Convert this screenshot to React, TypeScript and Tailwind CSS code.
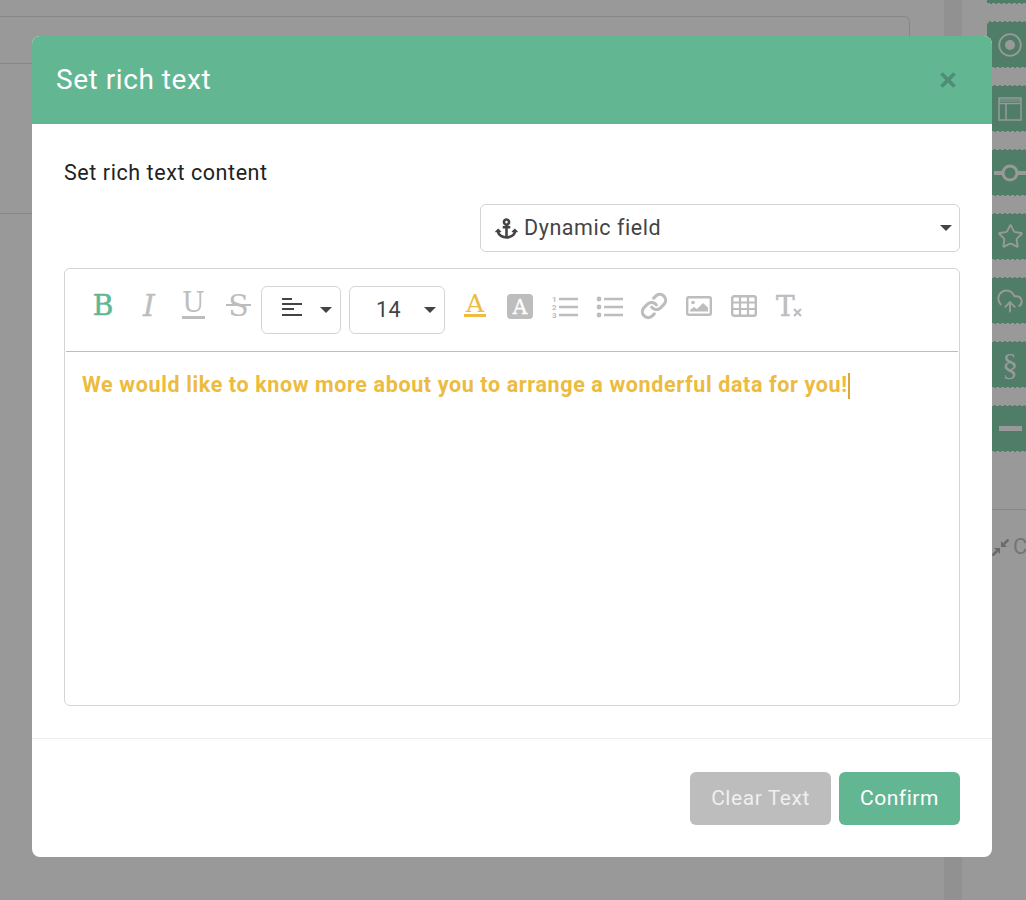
import { CloudUpload, Link, Star } from 'lucide-react';
import { FaAnchor } from 'react-icons/fa';

function Caret() {
  return <span className="w-0 h-0 border-x-[6.5px] border-x-transparent border-t-[6.5px] border-t-[#444]" />;
}

function OrderedIcon() {
  return (
    <svg width="28" height="26" viewBox="0 0 28 26" className="text-[#bdbdbd]">
      <text x="0" y="7" fontSize="8" fontWeight="700" fill="currentColor" fontFamily="Roboto">1</text>
      <text x="0" y="15" fontSize="8" fontWeight="700" fill="currentColor" fontFamily="Roboto">2</text>
      <text x="0" y="23" fontSize="8" fontWeight="700" fill="currentColor" fontFamily="Roboto">3</text>
      <path d="M7 4h19M7 12h19M7 20h19" stroke="currentColor" strokeWidth="2.600" />
    </svg>
  );
}

function BulletIcon() {
  return (
    <svg width="28" height="26" viewBox="0 0 28 26" className="text-[#bdbdbd]">
      <circle cx="3" cy="4" r="2.400" fill="currentColor" />
      <circle cx="3" cy="12" r="2.400" fill="currentColor" />
      <circle cx="3" cy="20" r="2.400" fill="currentColor" />
      <path d="M8 4h19M8 12h19M8 20h19" stroke="currentColor" strokeWidth="2.600" />
    </svg>
  );
}

function ImageIcon() {
  return (
    <svg width="26" height="20" viewBox="0 0 26 20" className="text-[#bdbdbd]">
      <rect x="1.200" y="1.200" width="23.600" height="17.600" rx="1.500" fill="none" stroke="currentColor" strokeWidth="2.400" />
      <circle cx="7" cy="6.500" r="1.800" fill="currentColor" />
      <path d="M4 15.500v-1.500l4-3 3 2 6-6 5 4.500v4z" fill="currentColor" />
    </svg>
  );
}

function TableIcon() {
  return (
    <svg width="26" height="22" viewBox="0 0 26 22" className="text-[#bdbdbd]">
      <rect x="1.200" y="1.200" width="23.600" height="19.600" rx="2" fill="none" stroke="currentColor" strokeWidth="2.400" />
      <path d="M1 7.500h24M1 14h24M9 1v20M17 1v20" stroke="currentColor" strokeWidth="2.200" />
    </svg>
  );
}

function Toolbar() {
  return (
    <div className="h-[83px] ml-px mr-px border-b border-[#bdbdbd] flex items-start pt-[17px] pl-[27px] shrink-0">
      <span className="w-[20px] h-[40px] flex items-center justify-center text-[28px] leading-none text-[#62b692] [-webkit-text-stroke:0.5px_#62b692] font-['DejaVu_Serif',serif]">B</span>
      <span className="ml-[28px] w-[16px] h-[40px] flex items-center justify-center text-[30px] leading-none italic text-[#bdbdbd] [-webkit-text-stroke:0.4px_#bdbdbd] font-['DejaVu_Serif',serif]">I</span>
      <span className="ml-[25px] w-[23px] h-[26px] mt-[7px] border-b-[3px] border-[#bdbdbd] flex items-start justify-center text-[27px] leading-[20px] text-[#bdbdbd] font-['DejaVu_Serif',serif]">U</span>
      <span className="relative ml-[21px] w-[25px] h-[40px] flex items-center justify-center text-[30px] leading-none text-[#bdbdbd] font-['DejaVu_Serif',serif]">
        S
        <span className="absolute left-0 right-0 top-[18px] h-[2px] bg-[#bdbdbd]" />
      </span>
      <div className="ml-[10px] w-[80px] h-[48px] border border-[#d4d4d4] rounded-md flex items-center pl-[20px] pr-[8px] justify-between">
        <svg width="20" height="20" viewBox="0 0 20 20" className="-mt-[6px]">
          <path d="M0 2h10M0 7h20M0 12h12M0 18h20" stroke="#444" strokeWidth="2.200" />
        </svg>
        <Caret />
      </div>
      <div className="ml-[8px] w-[96px] h-[48px] border border-[#d4d4d4] rounded-md flex items-center pl-[26px] pr-[8px] justify-between text-[21.500px] tracking-[0.5px] text-[#444]">
        <span>14</span>
        <Caret />
      </div>
      <span className="ml-[19px] mt-[8px] w-[22px] h-[23px] border-b-[3px] border-[#ecbb40] flex items-start justify-center text-[25px] leading-[20px] text-[#ecbb40] font-['DejaVu_Serif',serif]">A</span>
      <span className="ml-[21px] mt-[8px] w-[26px] h-[25px] rounded-sm bg-[#bdbdbd] flex items-center justify-center text-[20px] leading-none text-white font-['DejaVu_Serif',serif] [-webkit-text-stroke:0.4px_white]">A</span>
      <span className="ml-[19px] mt-[9px]"><OrderedIcon /></span>
      <span className="ml-[16px] mt-[9px]"><BulletIcon /></span>
      <span className="ml-[16px] mt-[6px]"><Link size={28} strokeWidth={2.700} className="text-[#bdbdbd]" /></span>
      <span className="ml-[18px] mt-[10px]"><ImageIcon /></span>
      <span className="ml-[19px] mt-[9px]"><TableIcon /></span>
      <span className="ml-[19px] mt-[7px] relative w-[28px] h-[28px]">
        <span className="block w-[17px] text-[#bdbdbd] font-['DejaVu_Serif',serif] text-[28px] leading-[28px] [-webkit-text-stroke:0.5px_#bdbdbd]">T</span>
        <svg width="9" height="9" viewBox="0 0 9 9" stroke="#bdbdbd" strokeWidth="2.200" className="absolute left-[17px] top-[15px]">
          <path d="M1 1l7 7M8 1L1 8" />
        </svg>
      </span>
    </div>
  );
}

function Tile({ children }: { children: React.ReactNode }) {
  return (
    <div className="w-[39px] h-[47px] rounded-l-sm bg-[#4f7d68] border-y border-dashed border-[#999] flex items-center pl-[7px] text-[#999] shrink-0">
      <div className="w-[32px] flex justify-center items-center">{children}</div>
    </div>
  );
}

export default function App() {
  return (
    <div className="relative w-[1026px] h-[900px] overflow-hidden bg-[#999] font-['Roboto',sans-serif]">
      {/* page behind the dialog */}
      <div className="flex h-full">
        <div className="w-[944px] pr-[34px] pt-[16px] shrink-0">
          <div className="h-[198px] border-t border-r border-b border-[#868686] rounded-tr-md flex flex-col">
            <div className="h-[47px] border-b border-[#868686]" />
          </div>
        </div>
        <div className="w-[18px] bg-[#919191] shrink-0" />
        <div className="w-[25px] shrink-0" />
        <div className="w-[39px] shrink-0 flex flex-col">
          <div className="h-[4px] bg-[#4f7d68] border-b border-dashed border-[#999]" />
          <div className="h-[17px]" />
          <div className="flex flex-col gap-[17px]">
            <Tile>
              <svg width="24" height="24" viewBox="0 0 24 24" fill="none">
                <circle cx="12" cy="12" r="10.800" stroke="currentColor" strokeWidth="1.800" />
                <circle cx="12" cy="12" r="5" fill="currentColor" />
              </svg>
            </Tile>
            <Tile>
              <svg width="24" height="24" viewBox="0 0 24 24" fill="none" stroke="currentColor" strokeWidth="1.500">
                <rect x="1" y="1" width="22" height="22" />
                <path d="M1 6.500h22M8 6.500V23" />
                <path d="M1 3.500h22" strokeWidth="3" strokeOpacity=".5" />
              </svg>
            </Tile>
            <Tile>
              <svg width="32" height="24" viewBox="0 0 32 24" fill="none" stroke="currentColor" strokeWidth="3">
                <circle cx="16" cy="12" r="7" />
                <path d="M0 12h9M23 12h9" strokeWidth="4" />
              </svg>
            </Tile>
            <Tile><Star size={27} strokeWidth={1.700} /></Tile>
            <Tile><CloudUpload size={28} strokeWidth={1.700} /></Tile>
            <Tile><span className="text-[32px] leading-none font-['Liberation_Serif',serif]">§</span></Tile>
            <Tile><span className="w-[23px] h-[5px] bg-[#999] block" /></Tile>
          </div>
          <div className="mt-[57px] border-t border-[#868686]" />
          <div className="mt-[26px] flex items-center gap-[4px] pl-[5px] text-[#757575] text-[22px] leading-none">
            <svg width="17" height="17" viewBox="0 0 17 17" fill="#6a6a6a" className="shrink-0">
              <path d="M9 8V2l6 6z" />
              <path d="M12 5l4.500-4.500" stroke="#6a6a6a" strokeWidth="2.500" />
              <path d="M8 9v6l-6-6z" />
              <path d="M5 12L0.500 16.500" stroke="#6a6a6a" strokeWidth="2.500" />
            </svg>
            <span>C</span>
          </div>
        </div>
      </div>

      {/* dialog */}
      <div className="absolute inset-0 pl-[32px] pt-[36px]">
        <div className="w-[960px] h-[821px] bg-white rounded-lg overflow-hidden flex flex-col">
          <div className="h-[88px] bg-[#62b692] flex items-center justify-between pl-[24px] pr-[35px] shrink-0">
            <span className="text-[28px] tracking-[0.55px] text-white">Set rich text</span>
            <svg width="18" height="18" viewBox="0 0 18 18" stroke="#4f8d76" strokeWidth="3.800">
              <path d="M2.500 2.500l13 13M15.500 2.500l-13 13" />
            </svg>
          </div>
          <div className="h-[615px] border-b border-[#ececec] px-[32px] pt-[36px] flex flex-col shrink-0">
            <div className="text-[21.500px] leading-[24px] pt-px -mb-px text-[#222] tracking-[0.57px]">Set rich text content</div>
            <div className="mt-[20px] ml-auto w-[480px] h-[48px] border border-[#d4d4d4] rounded-md flex items-center justify-between pl-[14px] pr-[7px] text-[#444] shrink-0">
              <span className="flex items-center gap-[6px] text-[21.500px] tracking-[0.55px]">
                <FaAnchor size={23} />
                Dynamic field
              </span>
              <Caret />
            </div>
            <div className="mt-[16px] h-[438px] border border-[#d4d4d4] rounded-md flex flex-col shrink-0">
              <Toolbar />
              <div className="pl-[17px] pr-[8px] pt-[20px] text-[21.500px] leading-[26px] font-bold text-[#ecbb40] tracking-[0.62px]">
                We would like to know more about you to arrange a wonderful data for you!<span className="inline-block w-[2px] h-[26px] bg-[#dba93a] align-middle" />
              </div>
            </div>
          </div>
          <div className="flex-1 flex items-start justify-end gap-[8px] pt-[33px] pr-[32px]">
            <button className="w-[141px] h-[53px] rounded-md bg-[#bdbdbd] text-[#efefef] text-[21px] tracking-[0.55px]">Clear Text</button>
            <button className="w-[121px] h-[53px] rounded-md bg-[#62b692] text-white text-[21px] tracking-[0.55px]">Confirm</button>
          </div>
        </div>
      </div>
    </div>
  );
}
